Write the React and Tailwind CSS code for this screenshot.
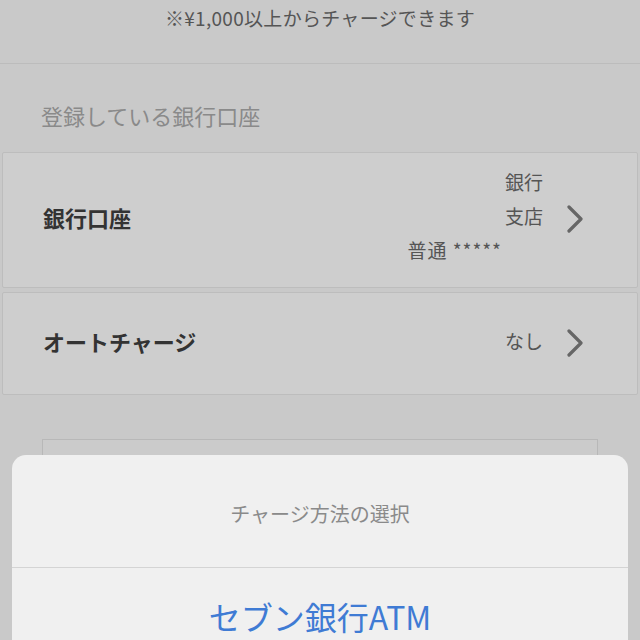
import React from 'react';

const font = { fontFamily: '"Noto Sans CJK JP", "Noto Sans", sans-serif' };

const Chevron = () => (
  <svg width="20" height="28" viewBox="0 0 20 28" className="shrink-0">
    <path d="M4 2 L16 14 L4 26" fill="none" stroke="#666" strokeWidth="3.2" strokeLinecap="round" strokeLinejoin="round" />
  </svg>
);

export default function App() {
  return (
    <div className="relative w-[640px] h-[640px] overflow-hidden bg-[#c9c9c9]" style={font}>
      <div className="h-[34px] flex items-center justify-center text-[19px] tracking-[0.3px] text-[#555] leading-none">
        ※¥1,000以上からチャージできます
      </div>
      <div className="h-[30px] border-b border-[#bcbcbc]" />

      <div className="pl-[41px] pt-[36px] pb-[22px] text-[22px] text-[#8a8a8a] leading-[30px]">
        登録している銀行口座
      </div>

      <div className="flex flex-col gap-[4px] px-[2px]">
        <div className="h-[136px] flex items-center bg-[#cecece] border border-[#bdbdbd] rounded-[2px] pl-[40px] pr-[52px] pb-[6px]">
          <div className="flex-1 text-[22px] font-bold text-[#333]">銀行口座</div>
          <div className="flex flex-col items-end text-[19px] text-[#555] leading-[34px] -mt-[2px]">
            <span>銀行</span>
            <span>支店</span>
            <span className="translate-x-[-41px] tracking-[1px]">普通 *****</span>
          </div>
          <div className="ml-[22px] mt-[4px]">
            <Chevron />
          </div>
        </div>

        <div className="h-[103px] flex items-center bg-[#cecece] border border-[#bdbdbd] rounded-[2px] pl-[40px] pr-[52px] pb-[5px]">
          <div className="flex-1 text-[22px] font-bold text-[#333]">オートチャージ</div>
          <span className="text-[19px] text-[#555]">なし</span>
          <div className="ml-[22px] mt-[4px]">
            <Chevron />
          </div>
        </div>
      </div>

      <div className="mx-[42px] mt-[44px] h-[80px] border border-[#b8b8b8] bg-[#cbcbcb]" />

      <div className="absolute left-[12px] right-[12px] top-[455px] h-[220px] bg-[#f0f0f0] rounded-[14px] overflow-hidden">
        <div className="h-[113px] flex items-center justify-center pt-[6px] text-[20px] text-[#8a8a8a] border-b border-[#d4d4d4]">
          チャージ方法の選択
        </div>
        <div className="h-[96px] flex items-center justify-center text-[32px] text-[#3f7bd4]">
          セブン銀行ATM
        </div>
      </div>
    </div>
  );
}
